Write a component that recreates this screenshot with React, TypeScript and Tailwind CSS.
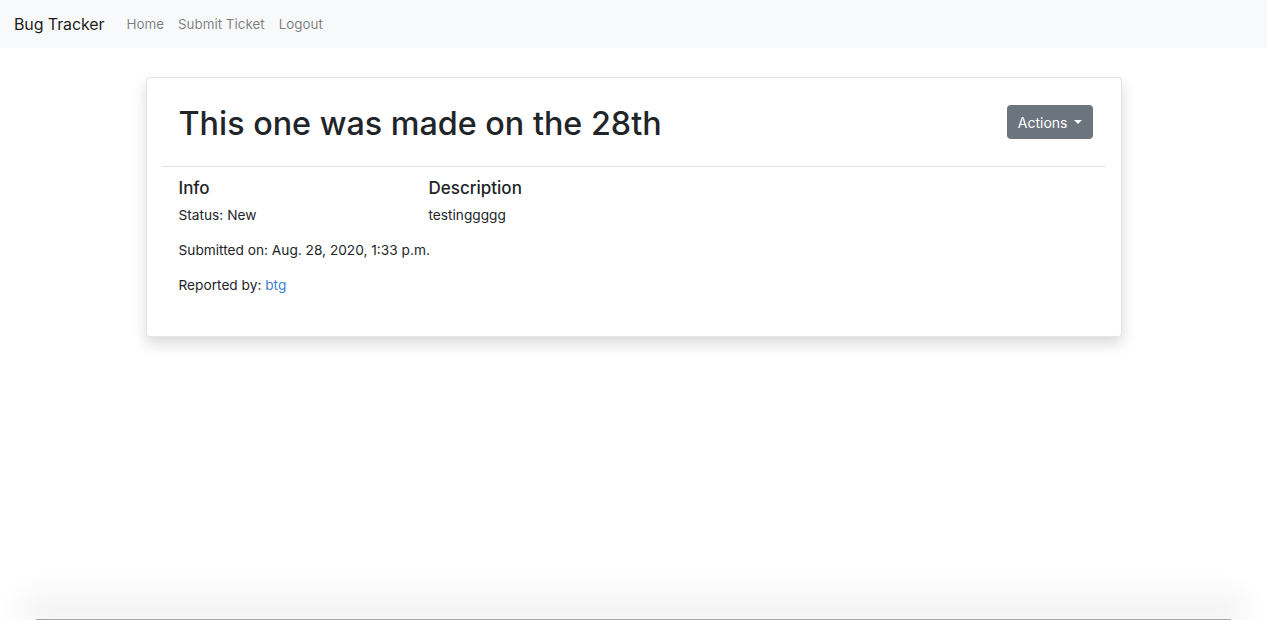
import React from "react";

const NAV_LINKS = ["Home", "Submit Ticket", "Logout"];

const INFO = [
  { label: "Status:", value: "New" },
  { label: "Submitted on:", value: "Aug. 28, 2020, 1:33 p.m." },
];

export default function App() {
  return (
    <div className="flex h-[620px] flex-col overflow-hidden bg-white font-['Inter',sans-serif] text-[#212529]">
      {/* navbar */}
      <nav className="flex h-12 items-center bg-[#f8f9fa] px-[14px]">
        <span className="mr-[22px] text-[16px] tracking-[-0.1px] text-black/90">Bug Tracker</span>
        <div className="flex items-center gap-[14px] text-[13.4px] text-black/50">
          {NAV_LINKS.map((link) => (
            <a key={link} href="#">
              {link}
            </a>
          ))}
        </div>
      </nav>

      {/* ticket card */}
      <div className="mx-auto mt-[29px] w-[976px] rounded-[4px] border border-black/10 bg-white px-[15px] pb-[40px] shadow-[0_7px_14px_rgba(0,0,0,0.15)]">
        <div className="flex items-center justify-between border-b border-[#dee2e6] pb-[19px] pl-[17px] pr-[13px] pt-[23px]">
          <h1 className="text-[32.3px] font-medium leading-[46px]">This one was made on the 28th</h1>
          <button className="mb-[4px] flex h-[34px] items-center gap-[6px] rounded-[4px] bg-[#6c757d] px-[11px] text-[14px] text-white">
            Actions
            <span className="h-0 w-0 border-x-[4px] border-t-[4px] border-x-transparent border-t-white" />
          </button>
        </div>

        <div className="grid grid-cols-[250px_1fr] px-[17px] pt-[11px] text-[13.7px]">
          <div>
            <h5 className="mb-[7px] text-[17px] font-medium leading-[20px]">Info</h5>
            {INFO.map((row) => (
              <p key={row.label} className="mb-[14px] whitespace-nowrap leading-[21px]">
                {row.label} {row.value}
              </p>
            ))}
            <p className="leading-[21px]">
              Reported by: <a href="#" className="text-[#3a7fd5]">btg</a>
            </p>
          </div>
          <div>
            <h5 className="mb-[7px] text-[17px] font-medium leading-[20px]">Description</h5>
            <p className="leading-[21px]">testinggggg</p>
          </div>
        </div>
      </div>

      {/* window shadow at the bottom edge */}
      <div className="mx-[36px] mt-auto h-px bg-[#a8a8a8] shadow-[0_-10px_30px_14px_rgba(0,0,0,0.06)]" />
    </div>
  );
}
